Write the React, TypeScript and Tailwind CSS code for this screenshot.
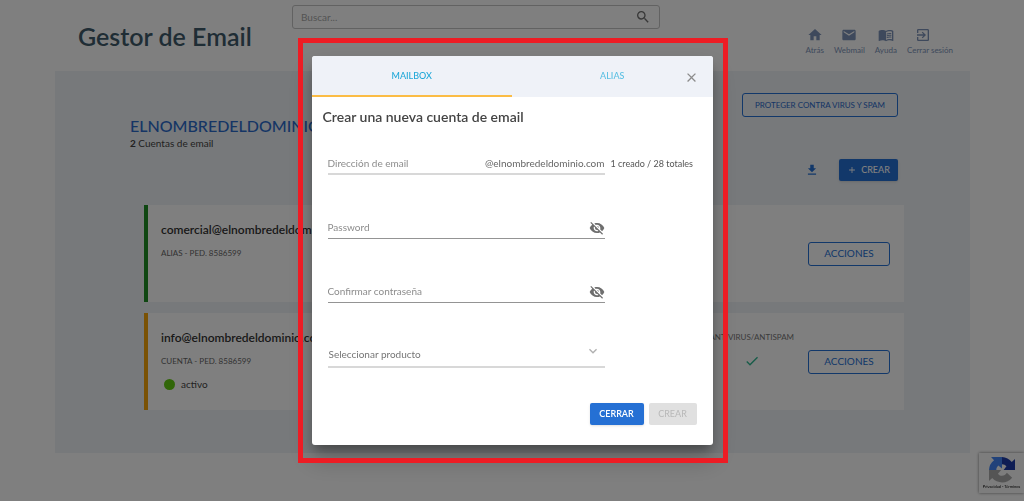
import { useState } from 'react';
import type { ReactNode } from 'react';
import {
  MdAdd,
  MdCheck,
  MdClose,
  MdEmail,
  MdExitToApp,
  MdGetApp,
  MdHome,
  MdKeyboardArrowDown,
  MdMenuBook,
  MdSearch,
  MdVisibilityOff,
} from 'react-icons/md';

function NavItem({ icon, label }: { icon: ReactNode; label: string }) {
  return (
    <a href="#" className="flex flex-col items-center gap-[2px] text-[8px] leading-[10px] text-[#7d93b8]">
      {icon}
      {label}
    </a>
  );
}

function Header() {
  return (
    <header className="flex h-[71px] items-start pr-[71px] pl-[78px]">
      <h1 className="w-[214px] pt-[21px] text-[25px] leading-[30px] font-semibold whitespace-nowrap text-[#3f5a6b]">
        Gestor de Email
      </h1>
      <div className="mt-[5px] flex h-6 max-w-[368px] flex-1 items-center rounded-[3px] border border-[#c4c4c4] pr-2 pl-2">
        <input
          type="search"
          aria-label="Buscar"
          placeholder="Buscar..."
          className="min-w-0 flex-1 bg-transparent text-[10px] outline-none placeholder:text-[#a8a8a8]"
        />
        <button type="button" aria-label="Buscar">
          <MdSearch className="size-4 text-[#707070]" />
        </button>
      </div>
      <nav className="ml-auto flex gap-[10px] pt-[27px]">
        <NavItem icon={<MdHome className="size-4" />} label="Atrás" />
        <NavItem icon={<MdEmail className="size-4" />} label="Webmail" />
        <NavItem icon={<MdMenuBook className="size-4" />} label="Ayuda" />
        <NavItem icon={<MdExitToApp className="ml-2 size-4 self-start" />} label="Cerrar sesión" />
      </nav>
    </header>
  );
}

type AccountProps = {
  email: string;
  detail: string;
  accent: string;
  active?: boolean;
  antivirus?: boolean;
};

function AccountCard({ email, detail, accent, active, antivirus }: AccountProps) {
  return (
    <li className={`flex min-h-[97px] items-center gap-[14px] border-l-4 bg-white pr-[14px] pl-[13px] ${accent}`}>
      <div className="flex-1 self-start pt-[17px]">
        <h3 className="text-[12px] leading-4 font-semibold text-[#333]">{email}</h3>
        <p className="mt-[9px] text-[8px] leading-3 text-[#666]">{detail}</p>
        {active && (
          <p className="mt-[11px] flex items-center gap-[6px] pl-[3px] text-[10px] leading-3 text-[#444]">
            <span className="size-[11px] rounded-full bg-[#62cc10]" />
            activo
          </p>
        )}
      </div>
      {antivirus && (
        <div className="flex flex-col items-center self-start pt-[18px] text-[8px] leading-3 text-[#777]">
          ANTIVIRUS/ANTISPAM
          <MdCheck className="mt-[10px] size-4 text-[#2eb892]" />
        </div>
      )}
      <button
        type="button"
        className="h-6 w-[82px] rounded-[3px] border border-[#2570d4] text-[10px] text-[#2570d4]"
      >
        ACCIONES
      </button>
    </li>
  );
}

function Accounts() {
  return (
    <main className="mr-[54px] ml-[55px] bg-[#eef2f6] pt-[22px] pr-[66px] pb-[43px] pl-[75px]">
      <div className="flex h-28 justify-between pr-[6px]">
        <div className="pt-[23px]">
          <h2 className="text-[16px] leading-5 font-medium text-[#2b6acb]">ELNOMBREDELDOMINIO</h2>
          <p className="mt-px text-[10px] leading-[13px] text-[#444]">
            <b>2</b> Cuentas de email
          </p>
        </div>
        <div className="flex flex-col items-end">
          <button
            type="button"
            className="h-6 w-[156px] rounded-[3px] border border-[#2570d4] text-[8px] text-[#2b6acb]"
          >
            PROTEGER CONTRA VIRUS Y SPAM
          </button>
          <div className="mt-[42px] flex items-center gap-5">
            <button type="button" aria-label="Descargar">
              <MdGetApp className="size-[14px] text-[#2570d4]" />
            </button>
            <button
              type="button"
              className="flex h-[22px] w-[59px] items-center justify-center gap-1 rounded-[2px] bg-[#2570d4] text-[9px] font-medium text-white shadow"
            >
              <MdAdd className="size-[10px]" />
              CREAR
            </button>
          </div>
        </div>
      </div>
      <ul className="flex flex-col gap-[11px] pl-[14px]">
        <AccountCard email="comercial@elnombredeldominio.com" detail="ALIAS - PED. 8586599" accent="border-[#1f8f24]" />
        <AccountCard
          email="info@elnombredeldominio.com"
          detail="CUENTA - PED. 8586599"
          accent="border-[#f5a50a]"
          active
          antivirus
        />
      </ul>
    </main>
  );
}

function RecaptchaBadge() {
  return (
    <aside className="fixed right-0 bottom-2 flex h-10 w-[45px] flex-col items-center bg-[#fafafa] pt-1 shadow-[0_0_3px_#808080]">
      <svg viewBox="0 0 64 64" className="size-[26px]" aria-hidden="true">
        <path fill="#1c3aa9" d="M64 32V5l-8 7.500A32 32 0 0 0 32 0v18c5 0 8 2 11 5l-7 9Z" />
        <path fill="#4285f4" d="M32 0H5l7.500 8A32 32 0 0 0 0 32h18c0-5 2-8 5-11l9 7Z" />
        <path fill="#ababab" d="M0 32v27l8-7.500A32 32 0 0 0 57 51L44 39c-3 5-7 7-12 7-5 0-8-2-10-5l8-9Z" />
      </svg>
      <p className="mt-px text-[4px] leading-[6px] whitespace-nowrap text-black">Privacidad - Términos</p>
    </aside>
  );
}

function PasswordField({ label }: { label: string }) {
  const [visible, setVisible] = useState(false);
  return (
    <div className="flex h-[22px] w-[277px] items-center border-b border-[#949494]">
      <input
        type={visible ? 'text' : 'password'}
        aria-label={label}
        placeholder={label}
        className="min-w-0 flex-1 bg-transparent text-[10px] outline-none placeholder:text-[#8c8c8c]"
      />
      <button type="button" aria-label="Mostrar contraseña" onClick={() => setVisible(!visible)}>
        <MdVisibilityOff className="size-4 text-[#6e6e6e]" />
      </button>
    </div>
  );
}

function NewAccountDialog() {
  return (
    <div className="fixed inset-0 flex items-center justify-center bg-black/50">
      <div
        role="dialog"
        aria-labelledby="dialog-title"
        className="relative w-[401px] rounded-[3px] bg-white text-[#444] shadow-[0_7px_10px_-3px_rgba(0,0,0,0.3),0_14px_24px_2px_rgba(0,0,0,0.2)]"
      >
        <div role="tablist" className="grid h-[41px] grid-cols-2 rounded-t-[3px] bg-[#eff2f8] text-[9px]">
          <button
            type="button"
            role="tab"
            aria-selected="true"
            className="border-b-2 border-[#fbbc45] font-medium text-[#20a8d8]"
          >
            MAILBOX
          </button>
          <button
            type="button"
            role="tab"
            aria-selected="false"
            className="border-b-2 border-transparent font-medium text-[#5bc0e3]"
          >
            ALIAS
          </button>
        </div>
        <button type="button" aria-label="Cerrar" className="absolute top-[14px] right-[14px]">
          <MdClose className="size-[15px] text-[#8c8c8c]" />
        </button>
        <h2 id="dialog-title" className="pt-[11px] pl-[11px] text-[14px] leading-[18px] font-semibold text-[#444]">
          Crear una nueva cuenta de email
        </h2>
        <form className="pt-[27px] pr-4 pb-5 pl-4">
          <div className="flex flex-col gap-[42px]">
            <div className="flex items-center gap-[6px] text-[10px]">
              <div className="flex h-[22px] w-[277px] shrink-0 items-center border-b-2 border-[#d8d8d8]">
                <input
                  type="text"
                  aria-label="Dirección de email"
                  placeholder="Dirección de email"
                  className="min-w-0 flex-1 bg-transparent outline-none placeholder:text-[#8c8c8c]"
                />
                <span className="text-[#666]">@elnombredeldominio.com</span>
              </div>
              <span className="text-[9px] whitespace-nowrap text-[#555]">1 creado / 28 totales</span>
            </div>
            <PasswordField label="Password" />
            <PasswordField label="Confirmar contraseña" />
          </div>
          <div className="relative mt-10 w-[277px]">
            <select
              aria-label="Seleccionar producto"
              className="block h-[25px] w-full appearance-none border-b-2 border-[#d8d8d8] bg-transparent pl-px text-[10px] text-[#757575] outline-none"
            >
              <option>Seleccionar producto</option>
            </select>
            <MdKeyboardArrowDown className="pointer-events-none absolute top-0 right-1 size-4 text-[#b0b0b0]" />
          </div>
          <div className="mt-[35px] flex justify-end gap-[5px] text-[9px]">
            <button
              type="button"
              className="h-[22px] w-[54px] rounded-[2px] bg-[#2570d4] font-semibold text-white shadow"
            >
              CERRAR
            </button>
            <button type="submit" disabled className="h-[22px] w-12 rounded-[2px] bg-[#e0e0e0] text-[#b8b8b8]">
              CREAR
            </button>
          </div>
        </form>
        <div className="pointer-events-none absolute -inset-y-[18px] -right-[15px] -left-[14px] border-[5px] border-[#ed1c24]" />
      </div>
    </div>
  );
}

export default function App() {
  return (
    <div className="min-h-screen bg-white font-['Lato','Open_Sans',sans-serif]">
      <Header />
      <Accounts />
      <RecaptchaBadge />
      <NewAccountDialog />
    </div>
  );
}
